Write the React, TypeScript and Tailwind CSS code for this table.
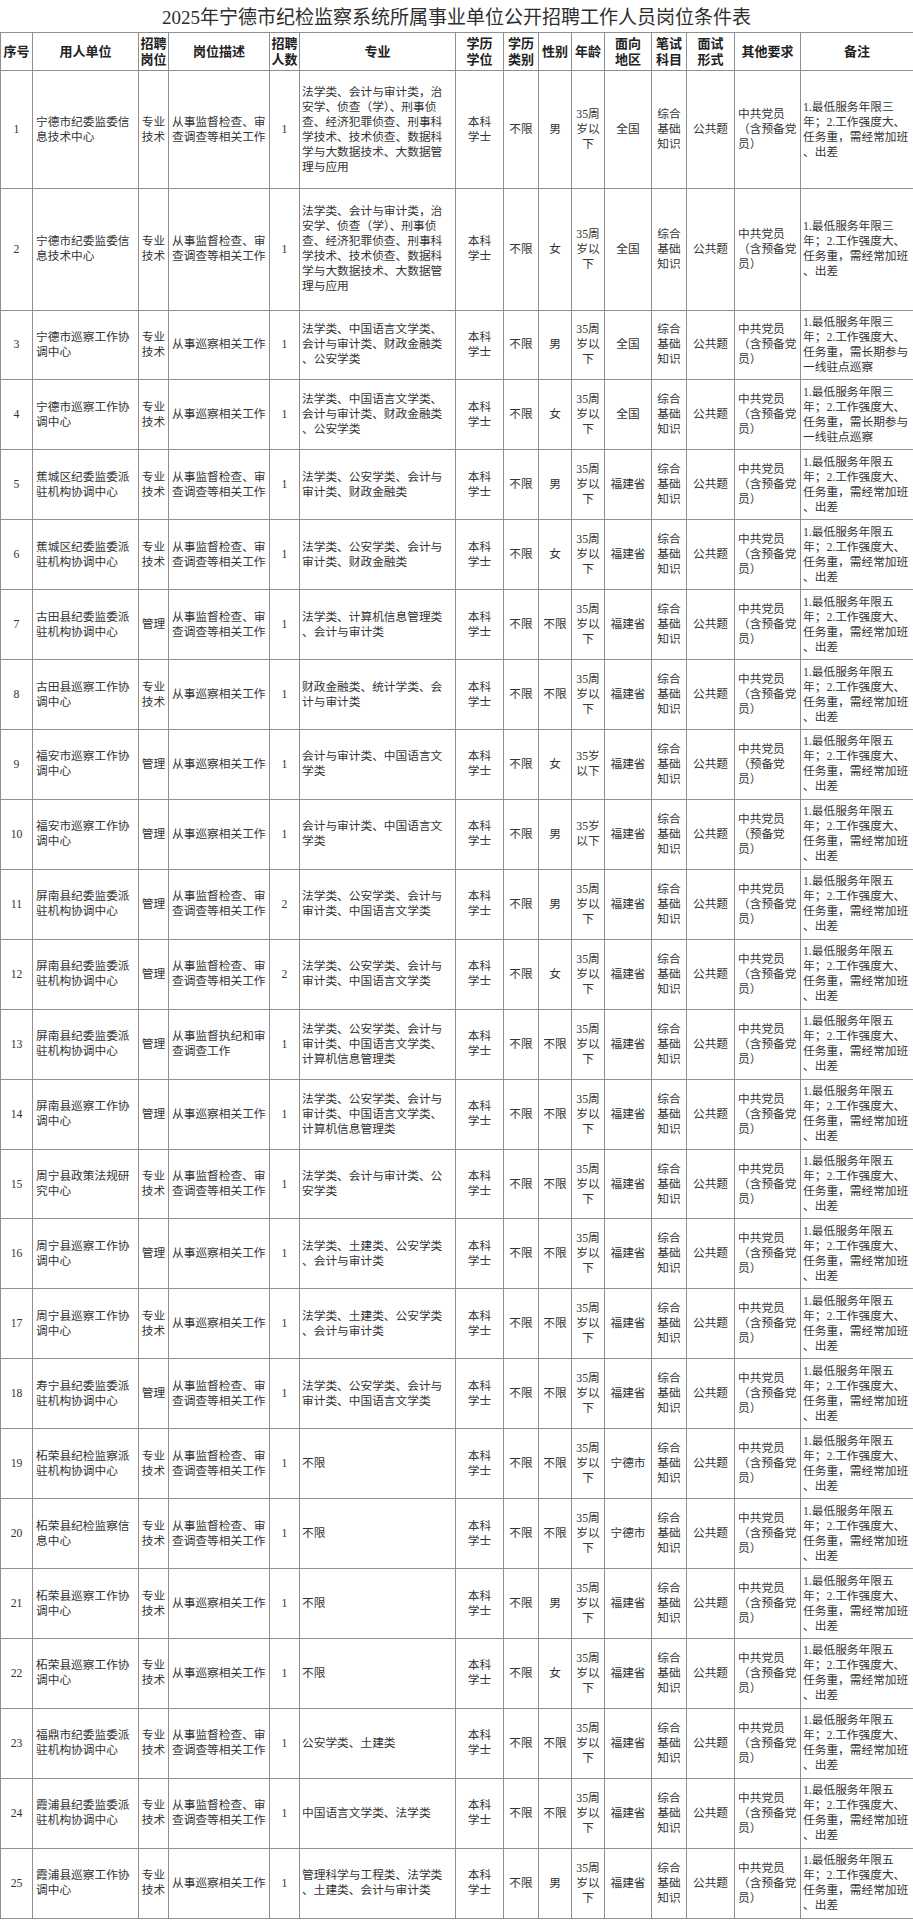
import React from 'react';

type Row = {
  n: string;
  unit: string[];
  post: string[];
  desc: string[];
  num: string;
  major: string[];
  sex: string;
  age: string[];
  area: string;
  party: string[];
  note: string[];
  h: string;
};

const A = ['从事监督检查、审', '查调查等相关工作'];
const B = ['从事巡察相关工作'];
const ZY = ['专业', '技术'];
const GL = ['管理'];
const AGE = ['35周', '岁以', '下'];
const AGE2 = ['35岁', '以下'];
const PARTY = ['中共党员', '（含预备党', '员）'];
const PARTY2 = ['中共党员', '（预备党', '员）'];
const N3a = ['1.最低服务年限三', '年；2.工作强度大、', '任务重，需经常加班', '、出差'];
const N3b = ['1.最低服务年限三', '年；2.工作强度大、', '任务重，需长期参与', '一线驻点巡察'];
const N5 = ['1.最低服务年限五', '年；2.工作强度大、', '任务重，需经常加班', '、出差'];
const H = 'h-[69.93px]';

const M1 = ['法学类、会计与审计类，治', '安学、侦查（学）、刑事侦', '查、经济犯罪侦查、刑事科', '学技术、技术侦查、数据科', '学与大数据技术、大数据管', '理与应用'];
const M3 = ['法学类、中国语言文学类、', '会计与审计类、财政金融类', '、公安学类'];
const M5 = ['法学类、公安学类、会计与', '审计类、财政金融类'];
const M11 = ['法学类、公安学类、会计与', '审计类、中国语言文学类'];
const M13 = ['法学类、公安学类、会计与', '审计类、中国语言文学类、', '计算机信息管理类'];
const M16 = ['法学类、土建类、公安学类', '、会计与审计类'];

const rows: Row[] = [
  { n: '1', unit: ['宁德市纪委监委信', '息技术中心'], post: ZY, desc: A, num: '1', major: M1, sex: '男', age: AGE, area: '全国', party: PARTY, note: N3a, h: 'h-[118px]' },
  { n: '2', unit: ['宁德市纪委监委信', '息技术中心'], post: ZY, desc: A, num: '1', major: M1, sex: '女', age: AGE, area: '全国', party: PARTY, note: N3a, h: 'h-[121.5px]' },
  { n: '3', unit: ['宁德市巡察工作协', '调中心'], post: ZY, desc: B, num: '1', major: M3, sex: '男', age: AGE, area: '全国', party: PARTY, note: N3b, h: H },
  { n: '4', unit: ['宁德市巡察工作协', '调中心'], post: ZY, desc: B, num: '1', major: M3, sex: '女', age: AGE, area: '全国', party: PARTY, note: N3b, h: H },
  { n: '5', unit: ['蕉城区纪委监委派', '驻机构协调中心'], post: ZY, desc: A, num: '1', major: M5, sex: '男', age: AGE, area: '福建省', party: PARTY, note: N5, h: H },
  { n: '6', unit: ['蕉城区纪委监委派', '驻机构协调中心'], post: ZY, desc: A, num: '1', major: M5, sex: '女', age: AGE, area: '福建省', party: PARTY, note: N5, h: H },
  { n: '7', unit: ['古田县纪委监委派', '驻机构协调中心'], post: GL, desc: A, num: '1', major: ['法学类、计算机信息管理类', '、会计与审计类'], sex: '不限', age: AGE, area: '福建省', party: PARTY, note: N5, h: H },
  { n: '8', unit: ['古田县巡察工作协', '调中心'], post: ZY, desc: B, num: '1', major: ['财政金融类、统计学类、会', '计与审计类'], sex: '不限', age: AGE, area: '福建省', party: PARTY, note: N5, h: H },
  { n: '9', unit: ['福安市巡察工作协', '调中心'], post: GL, desc: B, num: '1', major: ['会计与审计类、中国语言文', '学类'], sex: '女', age: AGE2, area: '福建省', party: PARTY2, note: N5, h: H },
  { n: '10', unit: ['福安市巡察工作协', '调中心'], post: GL, desc: B, num: '1', major: ['会计与审计类、中国语言文', '学类'], sex: '男', age: AGE2, area: '福建省', party: PARTY2, note: N5, h: H },
  { n: '11', unit: ['屏南县纪委监委派', '驻机构协调中心'], post: GL, desc: A, num: '2', major: M11, sex: '男', age: AGE, area: '福建省', party: PARTY, note: N5, h: H },
  { n: '12', unit: ['屏南县纪委监委派', '驻机构协调中心'], post: GL, desc: A, num: '2', major: M11, sex: '女', age: AGE, area: '福建省', party: PARTY, note: N5, h: H },
  { n: '13', unit: ['屏南县纪委监委派', '驻机构协调中心'], post: GL, desc: ['从事监督执纪和审', '查调查工作'], num: '1', major: M13, sex: '不限', age: AGE, area: '福建省', party: PARTY, note: N5, h: H },
  { n: '14', unit: ['屏南县巡察工作协', '调中心'], post: GL, desc: B, num: '1', major: M13, sex: '不限', age: AGE, area: '福建省', party: PARTY, note: N5, h: H },
  { n: '15', unit: ['周宁县政策法规研', '究中心'], post: ZY, desc: A, num: '1', major: ['法学类、会计与审计类、公', '安学类'], sex: '不限', age: AGE, area: '福建省', party: PARTY, note: N5, h: H },
  { n: '16', unit: ['周宁县巡察工作协', '调中心'], post: GL, desc: B, num: '1', major: M16, sex: '不限', age: AGE, area: '福建省', party: PARTY, note: N5, h: H },
  { n: '17', unit: ['周宁县巡察工作协', '调中心'], post: ZY, desc: B, num: '1', major: M16, sex: '不限', age: AGE, area: '福建省', party: PARTY, note: N5, h: H },
  { n: '18', unit: ['寿宁县纪委监委派', '驻机构协调中心'], post: GL, desc: A, num: '1', major: M11, sex: '不限', age: AGE, area: '福建省', party: PARTY, note: N5, h: H },
  { n: '19', unit: ['柘荣县纪检监察派', '驻机构协调中心'], post: ZY, desc: A, num: '1', major: ['不限'], sex: '不限', age: AGE, area: '宁德市', party: PARTY, note: N5, h: H },
  { n: '20', unit: ['柘荣县纪检监察信', '息中心'], post: ZY, desc: A, num: '1', major: ['不限'], sex: '不限', age: AGE, area: '宁德市', party: PARTY, note: N5, h: H },
  { n: '21', unit: ['柘荣县巡察工作协', '调中心'], post: ZY, desc: B, num: '1', major: ['不限'], sex: '男', age: AGE, area: '福建省', party: PARTY, note: N5, h: H },
  { n: '22', unit: ['柘荣县巡察工作协', '调中心'], post: ZY, desc: B, num: '1', major: ['不限'], sex: '女', age: AGE, area: '福建省', party: PARTY, note: N5, h: H },
  { n: '23', unit: ['福鼎市纪委监委派', '驻机构协调中心'], post: ZY, desc: A, num: '1', major: ['公安学类、土建类'], sex: '不限', age: AGE, area: '福建省', party: PARTY, note: N5, h: H },
  { n: '24', unit: ['霞浦县纪委监委派', '驻机构协调中心'], post: ZY, desc: A, num: '1', major: ['中国语言文学类、法学类'], sex: '不限', age: AGE, area: '福建省', party: PARTY, note: N5, h: H },
  { n: '25', unit: ['霞浦县巡察工作协', '调中心'], post: ZY, desc: B, num: '1', major: ['管理科学与工程类、法学类', '、土建类、会计与审计类'], sex: '男', age: AGE, area: '福建省', party: PARTY, note: N5, h: H },
];

const headers: string[][] = [
  ['序号'], ['用人单位'], ['招聘', '岗位'], ['岗位描述'], ['招聘', '人数'], ['专业'], ['学历', '学位'], ['学历', '类别'], ['性别'], ['年龄'], ['面向', '地区'], ['笔试', '科目'], ['面试', '形式'], ['其他要求'], ['备注'],
];

const widths = ['w-[32px]', 'w-[106px]', 'w-[30px]', 'w-[101px]', 'w-[30px]', 'w-[156px]', 'w-[48px]', 'w-[35px]', 'w-[33px]', 'w-[33px]', 'w-[47px]', 'w-[35px]', 'w-[48px]', 'w-[66px]', 'w-[113px]'];

function Lines({ lines }: { lines: string[] }) {
  return (
    <>
      {lines.map((l, i) => (
        <div key={i} className="whitespace-nowrap">
          {l}
        </div>
      ))}
    </>
  );
}

const td = 'border border-[#8f8f8f] align-middle p-0';
const L = `${td} text-left pl-[3px]`;
const C = `${td} text-center`;

export default function App() {
  return (
    <div className="w-[913px] bg-white text-[#333] font-['Liberation_Serif','Noto_Sans_CJK_SC',serif]">
      <div className="h-[32px] flex items-center justify-center pt-[2px] text-[19px] leading-none text-[#2e2e2e]">
        2025年宁德市纪检监察系统所属事业单位公开招聘工作人员岗位条件表
      </div>
      <table className="w-[913px] table-fixed border-collapse text-[11.7px] leading-[15px]">
        <colgroup>
          {widths.map((w, i) => (
            <col key={i} className={w} />
          ))}
        </colgroup>
        <thead>
          <tr className="h-[38px]">
            {headers.map((h, i) => (
              <th key={i} className={`${C} text-[13px] leading-[16px] font-bold text-[#222]`}>
                <Lines lines={h} />
              </th>
            ))}
          </tr>
        </thead>
        <tbody>
          {rows.map((r) => (
            <tr key={r.n} className={r.h}>
              <td className={C}>{r.n}</td>
              <td className={L}>
                <Lines lines={r.unit} />
              </td>
              <td className={C}>
                <Lines lines={r.post} />
              </td>
              <td className={L}>
                <Lines lines={r.desc} />
              </td>
              <td className={C}>{r.num}</td>
              <td className={`${td} text-left pl-[2px]`}>
                <Lines lines={r.major} />
              </td>
              <td className={C}>
                <Lines lines={['本科', '学士']} />
              </td>
              <td className={C}>不限</td>
              <td className={C}>{r.sex}</td>
              <td className={C}>
                <Lines lines={r.age} />
              </td>
              <td className={C}>{r.area}</td>
              <td className={C}>
                <Lines lines={['综合', '基础', '知识']} />
              </td>
              <td className={C}>公共题</td>
              <td className={L}>
                <Lines lines={r.party} />
              </td>
              <td className={`${td} text-left pl-[2px]`}>
                <Lines lines={r.note} />
              </td>
            </tr>
          ))}
        </tbody>
      </table>
    </div>
  );
}
